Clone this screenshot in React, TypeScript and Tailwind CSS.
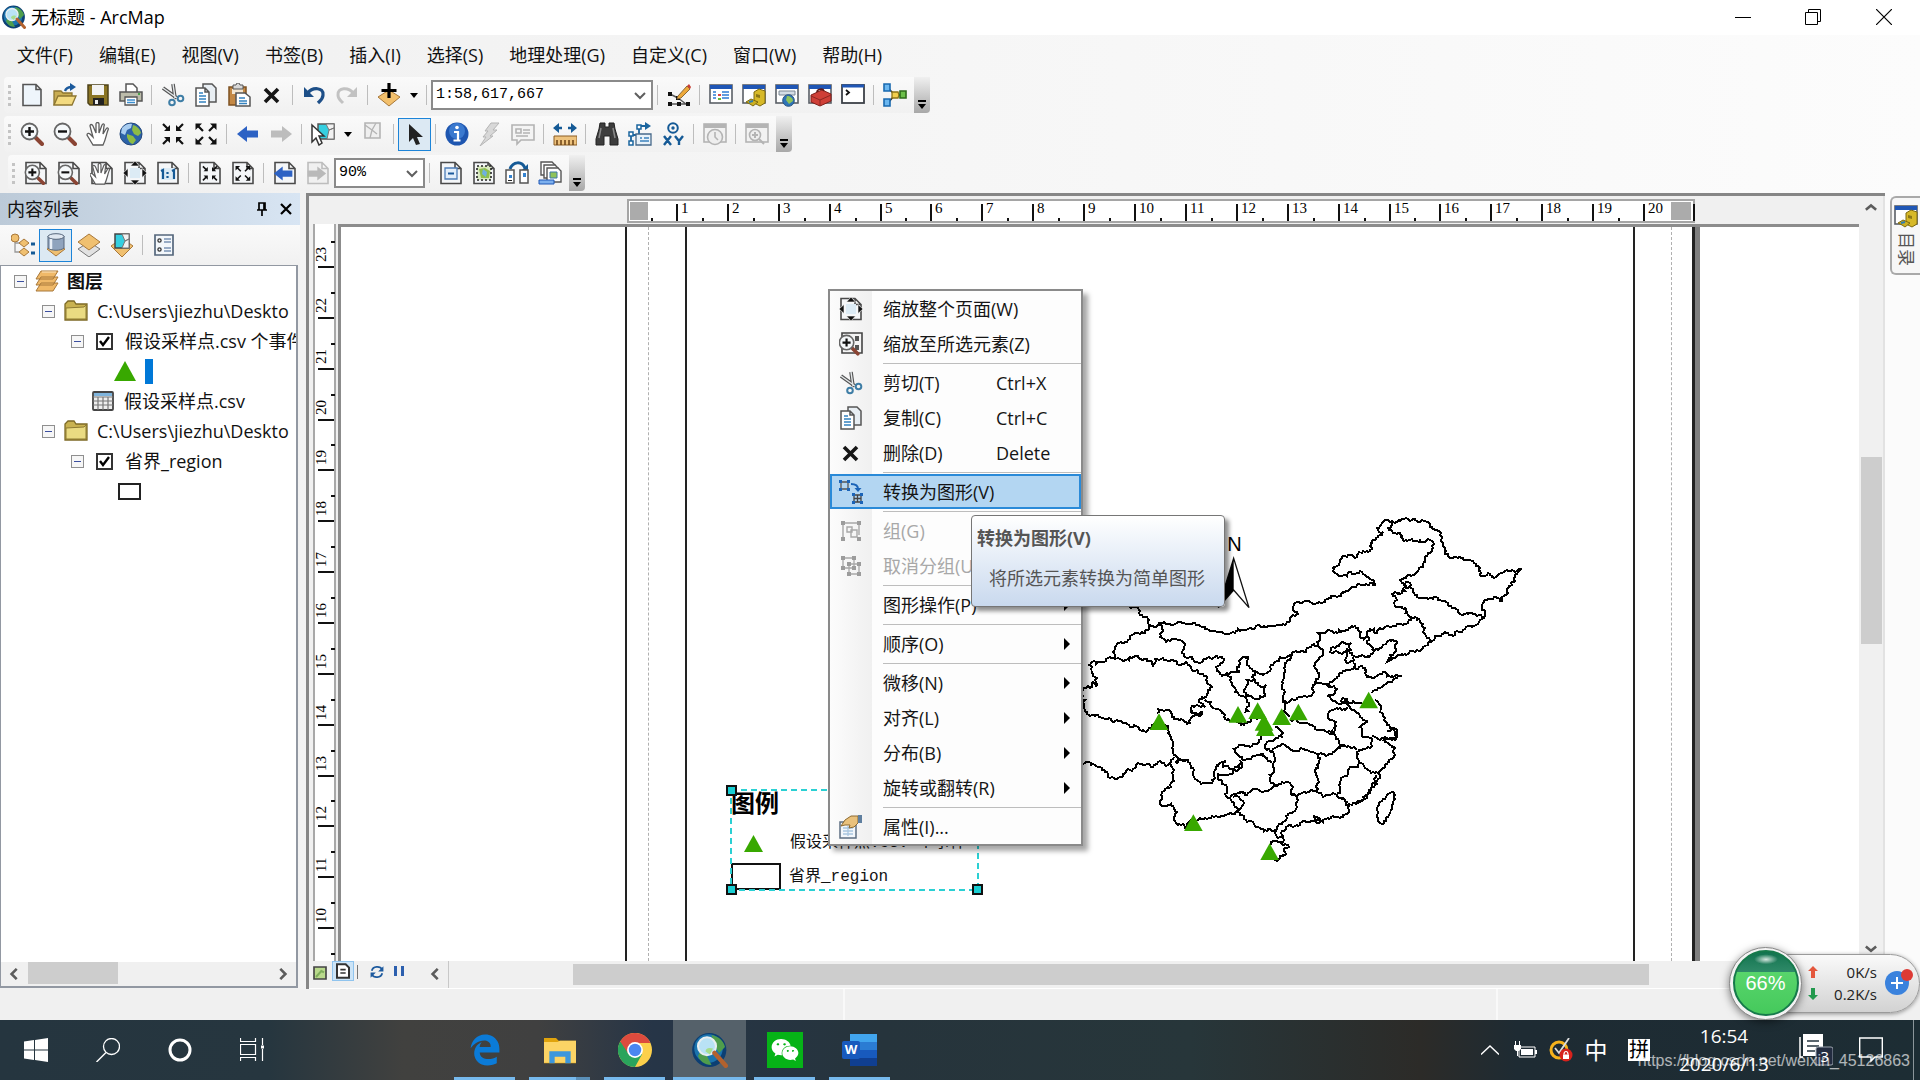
import type { ReactNode } from "react";
import { FaEdgeLegacy, FaWeixin } from "react-icons/fa6";

const menus = [
  "文件(F)",
  "编辑(E)",
  "视图(V)",
  "书签(B)",
  "插入(I)",
  "选择(S)",
  "地理处理(G)",
  "自定义(C)",
  "窗口(W)",
  "帮助(H)",
];

function Svg({ children, size = "size-6" }: { children: ReactNode; size?: string }) {
  return (
    <svg viewBox="0 0 24 24" className={`${size} shrink-0`} fill="none" aria-hidden="true">
      {children}
    </svg>
  );
}

/* ---------- icon parts ---------- */

const page = (
  <path d="M2 1.5h14l6 6v15H2zM16 1.5v6h6" fill="#f4f6f8" stroke="#4a4a4a" strokeWidth="1.6" />
);

const windowFrame = (
  <>
    <rect x="1" y="2" width="22" height="18" fill="#fff" stroke="#5a5f66" strokeWidth="1.6" />
    <rect x="1" y="2" width="22" height="4" fill="#1f56b5" />
  </>
);

const greyFrame = (
  <>
    <rect x="1" y="2" width="22" height="18" fill="#f2f2f2" stroke="#b4b4b4" strokeWidth="1.6" />
    <rect x="1" y="2" width="22" height="4" fill="#b4b4b4" />
  </>
);

const arrowsIn = (
  <>
    <path d="M2 2l5 5M22 2l-5 5M2 22l5-5M22 22l-5-5" stroke="#111" strokeWidth="2.2" />
    <path d="M9 3v6H3zM15 3v6h6zM9 21v-6H3zM15 21v-6h6z" fill="#111" />
  </>
);

const arrowsOut = (
  <>
    <path d="M4 4l5 5M20 4l-5 5M4 20l5-5M20 20l-5-5" stroke="#111" strokeWidth="2.2" />
    <path d="M1.5 8V1.500H8zM22.500 8V1.500H16zM1.500 16v6.500H8zM22.500 16v6.500H16z" fill="#111" />
  </>
);

const handShape = (
  <path
    d="M7 23L1 13c0-2 2-2 3-1l3 3L4 4c0-2 2-2 3 0l3 7V2c0-2 3-2 3 0v9l3-8c1-2 3-1 2 1l-1 8 3-5c1-2 3-1 2 1-2 5-2 9-5 15z"
    fill="#fff"
    stroke="#5c5c5c"
    strokeWidth="1.3"
  />
);

function Magnifier({ plus }: { plus?: boolean }) {
  return (
    <>
      <path d="M15 15l7 7" stroke="#8a4433" strokeWidth="4" strokeLinecap="round" />
      <circle cx="9.500" cy="9.500" r="8" fill="#f5f8fa" stroke="#666" strokeWidth="1.8" />
      <path d={plus ? "M5 9.500h9M9.500 5v9" : "M5 9.500h9"} stroke="#111" strokeWidth="2.4" />
    </>
  );
}

function Back({ fill }: { fill: string }) {
  return <path d="M1 12l10-8v4.500h11v7H11V20z" fill={fill} />;
}

function Globe() {
  return (
    <>
      <circle cx="12" cy="12" r="11" fill="#2c62a8" stroke="#23477a" />
      <path d="M3 6c3-4 8-5 10-4l-1 4-4 2-2 5-4-2z" fill="#a9cdf0" />
      <path d="M14 3c4 1 7 4 8 8l-3 3-4-2-2-4zM8 12l6 2 3 4-3 4c-3 0-5-4-6-7z" fill="#8dbb46" />
    </>
  );
}

function ArcGlobe({ size }: { size: string }) {
  return (
    <Svg size={size}>
      <circle cx="11.500" cy="12" r="11.400" fill="#0c3f73" />
      <circle cx="11" cy="11" r="9.500" fill="#1b74ad" />
      <path d="M13 2c5 1 8 4 9 8l-4 4-3-5zM5 14l5 2 3 6c-5 0-8-3-9-6z" fill="#4f9d4c" />
      <circle cx="10" cy="9.500" r="6" fill="#b9e2f5" stroke="#e8eef0" strokeWidth="1.400" />
      <path d="M9 13c0-2 2-3 5-2l-2 4z" fill="#a6dd8c" />
      <path d="M15 14l7.500 8.500" stroke="#b3622e" strokeWidth="3" strokeLinecap="round" />
    </Svg>
  );
}

const diamond = <path d="M12 3l11 8-11 11L1 11z" fill="#f0c070" stroke="#a9783a" />;

const icons: Record<string, ReactNode> = {
  new: (
    <path d="M3 1.500h13l5 5v16H3zM16 1.500v5h5" fill="#eef5fb" stroke="#555" strokeWidth="1.600" />
  ),
  open: (
    <>
      <path d="M1 22V8h7l2 2h9v4" fill="#c9ad52" stroke="#8d7630" strokeWidth="1.300" />
      <path d="M1 22l4-9h18l-4 9z" fill="#f3da80" stroke="#8d7630" strokeWidth="1.300" />
      <path d="M12 8c1-3 3-4 7-4" stroke="#1c5a9c" strokeWidth="2.400" />
      <path d="M17 0l6 4-6 4z" fill="#1c5a9c" />
    </>
  ),
  save: (
    <>
      <path d="M2 2h20v20H4l-2-2z" fill="#8a7424" stroke="#4e4218" strokeWidth="1.500" />
      <path d="M6 2h12v10H6z" fill="#f2f2f2" />
      <path d="M7 15h11v7H7z" fill="#222" />
      <path d="M9 17h3v4H9z" fill="#eee" />
    </>
  ),
  print: (
    <>
      <path d="M7 10V1h7l4 4v5" fill="#fff" stroke="#555" strokeWidth="1.500" />
      <path d="M1 9h22v9H1z" fill="#bcbcaa" stroke="#555" strokeWidth="1.500" />
      <path d="M6 14h12v8H6z" fill="#fff" stroke="#555" strokeWidth="1.300" />
      <path d="M8 17h8M8 19.500h8" stroke="#3c8fd0" strokeWidth="1.300" />
      <path d="M19 11h2" stroke="#4aa04a" strokeWidth="2" />
    </>
  ),
  cut: (
    <>
      <path d="M12 1l2 14M2 5l14 10" stroke="#555" strokeWidth="3.600" />
      <path d="M12 1l2 14M2 5l14 10" stroke="#e4e8ea" strokeWidth="1.400" />
      <circle cx="11" cy="19.500" r="2.800" stroke="#3f7ea6" strokeWidth="2" />
      <circle cx="19.500" cy="15.500" r="2.800" stroke="#3f7ea6" strokeWidth="2" />
    </>
  ),
  copy: (
    <>
      <path d="M9 1h9l4 4v14H9z" fill="#e8eef3" stroke="#555" strokeWidth="1.500" />
      <path d="M2 5h9l4 4v14H2zM11 5v4h4" fill="#fff" stroke="#555" strokeWidth="1.500" />
      <path d="M5 10h4M5 13h7M5 16h7M5 19h7" stroke="#3583c0" strokeWidth="1.500" />
    </>
  ),
  paste: (
    <>
      <path d="M2 4h17v18H2z" fill="#c48945" stroke="#7d5122" strokeWidth="1.500" />
      <path d="M5 6h11v5H5z" fill="#f3e6d2" />
      <path d="M6 2h3l1-2h2l1 2h3v4H6z" fill="#d8d8d8" stroke="#555" />
      <path d="M9 10h9l5 4v9H9z" fill="#fff" stroke="#555" strokeWidth="1.500" />
      <path d="M12 15h6M12 18h8M12 20.500h8" stroke="#3583c0" strokeWidth="1.300" />
    </>
  ),
  delete: <path d="M5 6l13 13M18 6L5 19" stroke="#161616" strokeWidth="3.600" />,
  undo: (
    <>
      <path d="M6 10c4-6 16-6 15 2 0 4-3 6-5 8" stroke="#1d4f88" strokeWidth="3.200" />
      <path d="M2 4v10h10z" fill="#1d4f88" />
    </>
  ),
  redo: (
    <>
      <path d="M18 10C14 4 2 4 3 12c0 4 3 6 5 8" stroke="#c2c2c2" strokeWidth="3" />
      <path d="M22 4v10H12z" fill="#c2c2c2" />
    </>
  ),
  add: (
    <>
      <path d="M12 7l11 7-11 9L1 14z" fill="#f3c06c" stroke="#a8783a" />
      <path d="M12 0v15M4.500 7.500h15" stroke="#000" strokeWidth="3.200" />
    </>
  ),
  edit: (
    <>
      <path d="M3 11l8 4M3 21h19M11 15l8 6" stroke="#555" strokeWidth="1.400" />
      <path d="M1 9h4v4H1zM1 19h4v4H1zM10 19h4v4h-4zM19 19h4v4h-4zM9 13h4v4H9z" fill="#111" />
      <path d="M11 13L20 3l3 3-9 9-4 1z" fill="#eda93a" stroke="#8a6a3a" />
      <path d="M20 3l2-2 2 3-1 2z" fill="#c83f34" />
    </>
  ),
  toc: (
    <>
      {windowFrame}
      <path d="M4 9h3M4 12h3M4 15h3M13 9h7M13 12h7M13 15h7" stroke="#2f7cd3" strokeWidth="1.600" />
      <path d="M9 12h3" stroke="#d44" strokeWidth="2" />
      <path d="M9 16h3" stroke="#6b3" strokeWidth="2" />
    </>
  ),
  catalog: (
    <>
      {windowFrame}
      <path d="M12 9l5-3 6 2v12l-5 3-6-3z" fill="#d7b928" stroke="#7e6a10" />
      <path d="M14 11l4 1v3l-4-1z" fill="#8c7716" />
      <path d="M4 19l5-3 7 3-5 4-3-2z" fill="#cdb021" stroke="#7e6a10" />
      <path d="M7 19l4-1" stroke="#2f7cb0" strokeWidth="2" />
    </>
  ),
  search: (
    <>
      {windowFrame}
      <path d="M4 8h16v4H4z" fill="#d5dde5" stroke="#7c8894" />
      <circle cx="13.500" cy="17.500" r="5.800" fill="#2f74b8" stroke="#24517f" />
      <path d="M12 13c3 0 6 2 6 5l-4 3-3-4z" fill="#8fc35a" />
    </>
  ),
  toolbox: (
    <>
      {windowFrame}
      <path d="M3 12l11-5 9 4v7l-11 5-9-4z" fill="#cf3f37" stroke="#7d1f1a" />
      <path d="M3 13l9 4 11-5M12 17v6" stroke="#8d2822" />
      <path d="M9 9c0-3 6-4 7-1" stroke="#5f1714" strokeWidth="1.600" />
    </>
  ),
  python: (
    <>
      <rect x="1" y="2" width="22" height="18" fill="#fff" stroke="#3c4148" strokeWidth="1.800" />
      <rect x="1" y="1.500" width="22" height="3" fill="#1f56b5" />
      <path d="M5 7l3 2.500L5 12" stroke="#111" strokeWidth="1.800" />
    </>
  ),
  model: (
    <>
      <path d="M5 5l6 6M5 20l6-7M12 12h8" stroke="#333" strokeWidth="1.500" />
      <path d="M1 1h6v7H1zM1 16h6v7H1z" fill="#6bb7f0" stroke="#1a69b0" strokeWidth="1.600" />
      <path d="M9 9l6 0 1 3-1 3H9z" fill="#f3cf4c" stroke="#8f7416" strokeWidth="1.300" />
      <path d="M17 8h6v7h-6z" fill="#6cc04a" stroke="#2e6b1b" strokeWidth="1.600" />
    </>
  ),
  zoomIn: <Magnifier plus />,
  zoomOut: <Magnifier />,
  pan: handShape,
  globe: <Globe />,
  fixedIn: arrowsIn,
  fixedOut: arrowsOut,
  back: <Back fill="#2d62c4" />,
  forward: (
    <g transform="matrix(-1 0 0 1 24 0)">
      <Back fill="#bdbdbd" />
    </g>
  ),
  selectFeatures: (
    <>
      <path d="M7 2h16v15H7z" fill="#35cfe0" stroke="#555" strokeWidth="1.500" />
      <path d="M15 2l3 6 5-2V2zM18 8l-2 9h7V6z" fill="#f1f1f1" stroke="#777" />
      <path d="M1 3l12 11-5 0 3 7-3 2-3-7-4 4z" fill="#fff" stroke="#333" strokeWidth="1.500" />
    </>
  ),
  clear: (
    <>
      <path d="M4 1h15v15H4z" fill="#efefef" stroke="#b4b4b4" strokeWidth="1.600" />
      <path d="M4 3l7 5 4-7M11 8l-2 8M11 8l5 4" stroke="#b4b4b4" strokeWidth="1.300" />
    </>
  ),
  pointer: <path d="M6 2l14 13h-6l3 7-4 1-3-7-4 4z" fill="#222" />,
  identify: (
    <>
      <circle cx="12" cy="12" r="11.500" fill="#1e56b0" />
      <circle cx="12" cy="9" r="8" fill="#3a79cf" />
      <path d="M9 10h4v8M8.500 18.500h7" stroke="#fff" strokeWidth="2.200" />
      <circle cx="12" cy="5.500" r="1.800" fill="#fff" />
    </>
  ),
  lightning: <path d="M13 1h8l-6 7h4l-7 6h3L2 24l6-9H5l5-6H7z" fill="#d8d8d8" stroke="#b5b5b5" />,
  popup: (
    <>
      <path d="M1 3h22v15H10l-4 4v-4H1z" fill="#f4f4f4" stroke="#b3b3b3" strokeWidth="1.600" />
      <path d="M5 7h5v4H5zM12 8h7M12 11h7M5 14h12" stroke="#b3b3b3" strokeWidth="1.600" />
    </>
  ),
  measure: (
    <>
      <path d="M4 6h5M15 6h5" stroke="#155a96" strokeWidth="2.600" />
      <path d="M0 6l6-5v10zM24 6l-6-5v10z" fill="#155a96" />
      <path d="M1 14h23v9H1z" fill="#eec37e" stroke="#8a5c25" />
      <path d="M4 23v-5M8 23v-5M12 23v-5M16 23v-5M20 23v-5" stroke="#6b4214" strokeWidth="1.500" />
    </>
  ),
  find: (
    <>
      <path d="M5 1h5v4h4V1h5l1 6 3 10v6h-8v-9h-6v9H1v-6l3-10z" fill="#3d3d3d" stroke="#222" />
      <path d="M6 6l-2 10M18 6l2 10" stroke="#8a8a8a" strokeWidth="1.500" />
    </>
  ),
  route: (
    <>
      <path d="M3 21v-8h8V4h8" stroke="#1b659f" strokeWidth="1.800" />
      <path d="M17 0l6 4-6 4z" fill="#1b659f" />
      <path d="M1 10h4v4H1zM9 3h4v4H9zM1 19h4v4H1z" fill="#fff" stroke="#1b659f" strokeWidth="1.500" />
      <path d="M8 12h15v11H8z" fill="#e9f2f9" stroke="#47698a" strokeWidth="1.300" />
      <path d="M12 16h2M16 16h5M12 19h9" stroke="#3c82bd" strokeWidth="1.600" />
    </>
  ),
  xy: (
    <>
      <circle cx="12" cy="6" r="4.800" stroke="#155a96" strokeWidth="2" />
      <circle cx="12" cy="6" r="1.700" fill="#155a96" />
      <path d="M3 14l7 9M10 14l-7 9M14 14l4 5 4-5M18 18v5" stroke="#155a96" strokeWidth="2.400" />
    </>
  ),
  time: (
    <>
      {greyFrame}
      <circle cx="12" cy="15" r="7.500" fill="#eee" stroke="#b4b4b4" strokeWidth="1.600" />
      <path d="M12 10v5l3 3" stroke="#b4b4b4" strokeWidth="1.600" />
    </>
  ),
  viewer: (
    <>
      {greyFrame}
      <circle cx="10" cy="13" r="5.500" fill="#eee" stroke="#b4b4b4" strokeWidth="1.600" />
      <path d="M7 13h6M10 10v6M14 17l5 5" stroke="#b4b4b4" strokeWidth="2" />
    </>
  ),
  pageZoomIn: (
    <>
      {page}
      <g transform="translate(0 3) scale(.88)">
        <Magnifier plus />
      </g>
    </>
  ),
  pageZoomOut: (
    <>
      {page}
      <g transform="translate(0 3) scale(.88)">
        <Magnifier />
      </g>
    </>
  ),
  pagePan: (
    <>
      {page}
      <g transform="translate(-1 2) scale(.92)">{handShape}</g>
    </>
  ),
  wholePage: (
    <>
      {page}
      <path d="M7 7h10v10H7z" fill="#dcebf5" />
      <path
        d="M12 0l4.500 5h-9zM12 24l4.500-5h-9zM0 12l5-4.500v9zM24 12l-5-4.500v9z"
        fill="#111"
        stroke="#fff"
        strokeWidth=".6"
      />
    </>
  ),
  oneToOne: (
    <>
      {page}
      <path d="M5 7h14v12H5z" fill="#dcebf5" />
      <path d="M5 10l2-1v9M16 10l2-1v9M11.500 11v2M11.500 15v2" stroke="#155a96" strokeWidth="2.200" />
    </>
  ),
  pageFixedIn: (
    <>
      {page}
      <g transform="translate(3.500 4) scale(.7)">{arrowsIn}</g>
    </>
  ),
  pageFixedOut: (
    <>
      {page}
      <g transform="translate(3.500 4) scale(.7)">{arrowsOut}</g>
    </>
  ),
  pageBack: (
    <>
      {page}
      <g transform="translate(0 2) scale(.88)">
        <Back fill="#2d62c4" />
      </g>
    </>
  ),
  pageForward: (
    <>
      <path d="M2 1.500h14l6 6v15H2zM16 1.500v6h6" fill="#f0f0f0" stroke="#bdbdbd" strokeWidth="1.600" />
      <g transform="matrix(-.88 0 0 .88 21 2)">
        <Back fill="#b9b9b9" />
      </g>
    </>
  ),
  draft: (
    <>
      {page}
      <path d="M6 7h12v11H6z" fill="#e3eefa" stroke="#4d7db8" strokeWidth="1.300" />
      <path d="M9 12.500h6" stroke="#1c5a9c" strokeWidth="2" />
    </>
  ),
  focus: (
    <>
      {page}
      <path d="M5 5h14v14H5z" fill="#d8e8c0" stroke="#222" strokeWidth="1.600" strokeDasharray="2 2" />
      <path d="M7 8l6-1 5 3-1 7H9z" fill="#8fbf4c" />
      <path d="M11 8l4 3-1 5-4-3z" fill="#6fb1de" />
    </>
  ),
  layout: (
    <>
      <path d="M5 8c3-8 12-8 15-1" stroke="#155a96" strokeWidth="3" />
      <path d="M23 3v7h-7z" fill="#155a96" />
      <path d="M1 9h8v13H1zM15 9h8v13h-8z" fill="#fff" stroke="#555" strokeWidth="1.500" />
      <path d="M4 14h3v3H4zM18 12h3v4h-3z" fill="#3583d0" />
      <path d="M3 19.500h4" stroke="#222" />
    </>
  ),
  pages: (
    <>
      <path d="M3 1h11l3 3v10H3z" fill="#fff" stroke="#555" strokeWidth="1.400" />
      <path d="M6 4h11l3 3v10H6z" fill="#fff" stroke="#555" strokeWidth="1.400" />
      <path d="M9 7h11l3 3v11H9z" fill="#fff" stroke="#555" strokeWidth="1.400" />
      <path d="M12 11h7v6h-7z" fill="#8fc35a" stroke="#3d78a8" />
      <path d="M1 19h15v4H1z" fill="#7db0ee" stroke="#1f56b5" />
    </>
  ),
  bySource: (
    <>
      <path d="M4 6v13h8M4 10h8" stroke="#999" strokeWidth="1.300" />
      <circle cx="4" cy="5" r="4" fill="#f0c070" stroke="#a9783a" />
      <path d="M13 6l5 4-5 4-5-4zM13 15l5 4-5 4-5-4z" fill="#f0c070" stroke="#a9783a" />
      <path d="M20 11h4M20 20h4" stroke="#155a96" strokeWidth="3" />
    </>
  ),
  byDb: (
    <>
      <path d="M12 12l9 4-9 7-9-7z" fill="#f0c070" stroke="#a9783a" />
      <path d="M4 3v12c3 3 13 3 16 0V3z" fill="#8fa3bd" stroke="#57677c" />
      <ellipse cx="12" cy="3.500" rx="8" ry="2.800" fill="#dfe7f0" stroke="#57677c" />
      <path d="M7 6v10" stroke="#e8eef5" strokeWidth="2.500" />
    </>
  ),
  byVisible: (
    <>
      <path d="M12 9l11 7-11 8-11-8z" fill="#e2e2e2" stroke="#777" />
      <path d="M12 1l11 8-11 8L1 9z" fill="#f0c070" stroke="#a9783a" />
    </>
  ),
  bySelection: (
    <>
      <g transform="translate(0 2)">{diamond}</g>
      <path d="M5 1h14v14H5z" fill="#35cfe0" stroke="#444" strokeWidth="1.500" />
      <path d="M12 1l3 7 4-2V1zM15 8l-3 7h7V6z" fill="#f1f1f1" stroke="#777" />
    </>
  ),
  options: (
    <>
      <path d="M3 2h18v20H3z" fill="#f3f7fb" stroke="#55677c" strokeWidth="1.700" />
      <circle cx="7.500" cy="7.500" r="1.600" stroke="#333" strokeWidth="1.300" />
      <circle cx="7.500" cy="16.500" r="1.600" stroke="#333" strokeWidth="1.300" />
      <path d="M12 6h7M12 9h7M12 15h7M12 18h7" stroke="#7a93b4" strokeWidth="1.500" />
    </>
  ),
  layers: (
    <>
      <path d="M6 14h17l-5 8H1zM6 8h17l-5 8H1zM6 2h17l-5 8H1z" fill="#f0b968" stroke="#a8783a" />
      <path d="M7 3h14" stroke="#fbe5c0" />
    </>
  ),
  folder: (
    <>
      <path d="M1 21V5l3-3h6l2 3h11v16z" fill="#c9b251" stroke="#7d6a26" strokeWidth="1.300" />
      <path d="M2 9l18-1 2-2v14H2z" fill="#eadb82" stroke="#8d7a32" />
    </>
  ),
  table: (
    <>
      <rect x="2" y="3" width="20" height="18" rx="1" fill="#eee" stroke="#444" strokeWidth="1.800" />
      <path d="M3 4h18v3H3z" fill="#7fb4dc" />
      <path d="M2 8h20M2 12h20M2 16h20M7 8v13M12 8v13M17 8v13" stroke="#777" strokeWidth="1.200" />
    </>
  ),
  zoomSelected: (
    <>
      <path d="M3 1h20v20H3z" fill="#f4f4f4" stroke="#444" strokeWidth="1.600" />
      <path d="M16 4h4v5h-4zM16 13h4v5h-4z" fill="#555" />
      <g transform="translate(-1 2) scale(.9)">
        <Magnifier plus />
      </g>
    </>
  ),
  convert: (
    <>
      <path d="M2 2h7v7H2z" stroke="#555" strokeWidth="1.300" />
      <path d="M0 0h3v3H0zM8 0h3v3H8zM0 8h3v3H0zM8 8h3v3H8z" fill="#1b64b8" />
      <path d="M12 4c5 0 7 2 7 5" stroke="#1b64b8" strokeWidth="2" />
      <path d="M15.500 8h7L19 12z" fill="#1b64b8" />
      <path d="M15 15h7v7h-7zM18.500 15v7M15 18.500h7" stroke="#444" strokeWidth="1.300" />
      <path d="M13 13h3v3h-3zM21 13h3v3h-3zM13 21h3v3h-3zM21 21h3v3h-3z" fill="#1b64b8" />
    </>
  ),
  group: (
    <>
      <path d="M4 4v16M4 4h16v12M8 8h5v5H8zM12 11h6v7h-6z" stroke="#a8a8a8" strokeWidth="1.400" />
      <path d="M2 2h4v4H2zM18 2h4v4h-4zM2 18h4v4H2zM18 18h4v4h-4z" fill="#9c9c9c" />
    </>
  ),
  ungroup: (
    <>
      <path d="M4 4h11v10H4zM10 10h10v10H10z" stroke="#a8a8a8" strokeWidth="1.300" />
      <path
        d="M2 2h4v4H2zM13 2h4v4h-4zM2 12h4v4H2zM13 12h4v4h-4zM8 8h4v4H8zM18 8h4v4h-4zM8 18h4v4H8zM18 18h4v4h-4z"
        fill="#9c9c9c"
      />
    </>
  ),
  properties: (
    <>
      <path d="M1 7h16v16H1z" fill="#f3f7fb" stroke="#5d6f82" strokeWidth="1.500" />
      <path d="M4 13h10M4 16h10M4 19h10M9 11v10" stroke="#a9c6e0" strokeWidth="1.300" />
      <path d="M2 11l4-6 6-4h7v7l-4 4-5 1 1-3-5 0z" fill="#e9c17c" stroke="#8d6a30" />
      <path d="M19 0h4v8h-4z" fill="#5f7f9f" />
    </>
  ),
};

/* ---------- toolbars ---------- */

function ToolButton({ id, label, active, off }: { id: string; label: string; active?: boolean; off?: boolean }) {
  return (
    <button
      aria-label={label}
      disabled={off}
      className={`flex size-[33px] shrink-0 items-center justify-center ${
        active ? "border border-[#1c84d8] bg-[#dce9f3]" : ""
      }`}
    >
      <Svg>{icons[id]}</Svg>
    </button>
  );
}

function Sep() {
  return (
    <div className="flex w-[9px] shrink-0 justify-center">
      <div className="h-5 w-px bg-[#bdbdbd]" />
    </div>
  );
}

function Caret() {
  return (
    <button aria-label="更多" className="flex w-[17px] shrink-0 items-center justify-center">
      <svg viewBox="0 0 8 5" className="h-[5px] w-2">
        <path d="M0 0h8L4 5z" />
      </svg>
    </button>
  );
}

function Combo({ label, value, width }: { label: string; value: string; width: string }) {
  return (
    <div className={`relative flex shrink-0 ${width}`}>
      <select
        aria-label={label}
        className="h-[30px] w-full appearance-none border-2 border-[#8a8a8a] bg-white pl-[3px] text-[15px] text-black [font-family:'Liberation_Mono',monospace]"
      >
        <option>{value}</option>
      </select>
      <svg viewBox="0 0 12 8" className="pointer-events-none absolute top-3 right-[7px] h-2 w-3">
        <path d="M1 1l5 5 5-5" fill="none" stroke="#5f5f5f" strokeWidth="2" />
      </svg>
    </div>
  );
}

function Toolbar({ children, indent }: { children: ReactNode; indent?: boolean }) {
  return (
    <div
      className={`flex h-9 items-center self-start rounded-l bg-linear-to-b from-[#fafafa] to-[#f1f1f1] ${
        indent ? "ml-2" : "ml-1"
      }`}
    >
      <div className="flex w-[11px] shrink-0 flex-col items-center gap-[3px]">
        {[0, 1, 2, 3].map((i) => (
          <span key={i} className="size-[3px] bg-[#c4c4c4]" />
        ))}
      </div>
      {children}
      <button
        aria-label="工具条选项"
        className="ml-[3px] flex h-full w-4 items-end justify-center self-end rounded-br bg-linear-to-b from-[#f0f0f0] to-[#a8a8a8] pb-1"
      >
        <svg viewBox="0 0 10 9" className="h-[9px] w-2.5">
          <path d="M1 0h8v2H1zM1 4h8L5 9z" />
        </svg>
      </button>
    </div>
  );
}

/* ---------- contents panel ---------- */

function Expander() {
  return (
    <button
      aria-label="折叠"
      className="flex size-[13px] shrink-0 items-center justify-center border border-[#8f8f8f] bg-[#f6f6f6]"
    >
      <span className="h-px w-[7px] bg-[#3b4fa0]" />
    </button>
  );
}

function LayerRow({ name }: { name: string }) {
  return (
    <div className="flex h-[30px] items-center gap-3 pl-[70px]">
      <Expander />
      <label className="flex items-center gap-3">
        <span className="relative flex size-[17px] shrink-0">
          <input
            type="checkbox"
            defaultChecked
            className="peer size-[17px] appearance-none border-2 border-[#333] bg-white"
          />
          <svg
            viewBox="0 0 17 17"
            className="pointer-events-none absolute inset-0 hidden size-[17px] peer-checked:block"
          >
            <path d="M4 8l3 4 6-8" fill="none" stroke="#000" strokeWidth="2.400" />
          </svg>
        </span>
        {name}
      </label>
    </div>
  );
}

function FolderRow({ name }: { name: string }) {
  return (
    <div className="flex h-[30px] items-center gap-[9px] pl-[41px]">
      <Expander />
      <Svg>{icons.folder}</Svg>
      {name}
    </div>
  );
}

function Chevron({ dir }: { dir: "left" | "right" | "up" | "down" }) {
  const d = {
    left: "M9 1L3 7l6 6",
    right: "M5 1l6 6-6 6",
    up: "M1 9l6-5 6 5",
    down: "M1 4l6 5 6-5",
  }[dir];
  return (
    <svg viewBox="0 0 14 14" className="size-3">
      <path d={d} fill="none" stroke="#5c5c5c" strokeWidth="3" />
    </svg>
  );
}

function ContentsPanel() {
  return (
    <aside className="flex w-[300px] shrink-0 flex-col">
      <header className="flex h-8 items-center bg-linear-to-r from-[#bccad8] to-[#d8e5f3] pr-0.5 pl-[7px] text-[18px] leading-6">
        <h2 className="flex-1">内容列表</h2>
        <button aria-label="自动隐藏" className="flex w-6 justify-center">
          <svg viewBox="0 0 12 14" className="h-3.5 w-3">
            <path d="M3 8V1h6v7M8 1v7M1 8h10M6 8v6" fill="none" stroke="#000" strokeWidth="1.700" />
          </svg>
        </button>
        <button aria-label="关闭" className="flex w-6 justify-center">
          <svg viewBox="0 0 12 12" className="size-3">
            <path d="M1 1l10 10M11 1L1 11" stroke="#000" strokeWidth="2.200" />
          </svg>
        </button>
      </header>
      <div className="flex h-10 items-center bg-linear-to-b from-[#fafafa] to-[#f1f1f1] pl-[6px]">
        <ToolButton id="bySource" label="按绘制顺序列出" />
        <ToolButton id="byDb" label="按源列出" active />
        <ToolButton id="byVisible" label="按可见性列出" />
        <ToolButton id="bySelection" label="按选择列出" />
        <Sep />
        <ToolButton id="options" label="选项" />
      </div>
      <div className="mr-0.5 mb-px flex min-h-0 flex-1 flex-col border-2 border-t border-l border-[#9298a2] bg-white text-[18px] leading-6">
        <div className="flex-1 overflow-hidden whitespace-nowrap">
          <div className="flex h-[30px] items-center gap-2 pl-[13px] font-bold">
            <Expander />
            <Svg>{icons.layers}</Svg>
            图层
          </div>
          <FolderRow name="C:\Users\jiezhu\Deskto" />
          <LayerRow name="假设采样点.csv 个事件" />
          <div className="flex h-[30px] items-center gap-[9px] pl-[113px]">
            <svg viewBox="0 0 22 20" className="h-5 w-[22px]">
              <path d="M11 0l11 20H0z" fill="#38a800" />
            </svg>
            <span className="h-[25px] w-2 bg-[#0078d7]" />
          </div>
          <div className="flex h-[30px] items-center gap-[9px] pl-[90px]">
            <Svg>{icons.table}</Svg>
            假设采样点.csv
          </div>
          <FolderRow name="C:\Users\jiezhu\Deskto" />
          <LayerRow name="省界_region" />
          <div className="flex h-[30px] items-center pl-[117px]">
            <span className="h-[17px] w-[23px] border-2 border-[#222]" />
          </div>
        </div>
        <div className="flex h-6 items-center bg-[#f0f0f0] px-2">
          <Chevron dir="left" />
          <div className="flex h-full flex-1 px-[7px]">
            <div className="h-[22px] w-[90px] bg-[#cdcdcd]" />
          </div>
          <Chevron dir="right" />
        </div>
      </div>
    </aside>
  );
}

/* ---------- rulers ---------- */

const rulerText = "text-[15px] [font-family:'Liberation_Serif',serif]";

function TopRuler() {
  const ticks = Array.from({ length: 20 }, (_, i) => i + 1);
  return (
    <svg viewBox="0 0 1072 25" className="h-[25px] w-[1072px] shrink-0" shapeRendering="crispEdges">
      <rect x="1" y="1" width="1066" height="22" fill="#fff" stroke="#a5a5a5" strokeWidth="2" />
      <rect x="3" y="3" width="18" height="18" fill="#ababab" />
      <rect x="1044" y="3" width="20" height="18" fill="#ababab" />
      <path d="M1067 5v17" stroke="#111" strokeWidth="2" />
      {ticks.map((n) => (
        <g key={n}>
          <path
            d={`M${Math.round(n * 50.9 - 1)} 5v17M${Math.round(n * 50.9 - 26)} 19v3`}
            stroke="#111"
            strokeWidth="2"
          />
          <text x={Math.round(n * 50.9 + 3)} y="14" className={rulerText}>
            {n}
          </text>
        </g>
      ))}
    </svg>
  );
}

function SideRuler() {
  const ticks = Array.from({ length: 16 }, (_, i) => 23 - i);
  return (
    <svg className="w-[29px] shrink-0 self-stretch bg-[#f0f0f0]" shapeRendering="crispEdges">
      <rect x="4" y="0" width="22" height="100%" fill="#fff" />
      <path d="M5 0v2000M25.500 0v2000" stroke="#a8a8a8" strokeWidth="2" />
      {ticks.map((n, i) => {
        const y = Math.round(43 + i * 50.85);
        return (
          <g key={n}>
            <path d={`M9 ${y}h16M22 ${y - 25}h4`} stroke="#111" strokeWidth="2" />
            <text transform={`translate(17 ${y - 5}) rotate(-90)`} className={rulerText}>
              {n}
            </text>
          </g>
        );
      })}
    </svg>
  );
}

/* ---------- map ---------- */

// Province and coast lines, in thirds of a pixel.
const borders = [
  "150,320 180,333 190,350 205,370 235,375 280,374 330,373 365,380 400,392 440,402 465,398 510,385 560,380 600,375 630,358 655,342 640,325 645,308 670,305 710,310 740,297 770,290 790,275 820,262 850,256 885,256 880,240 850,222 830,218 800,228 765,220 760,212 778,195 790,168 830,172 865,155 872,130 895,108 908,95 890,85 905,68 935,62 985,58 1020,66 1050,72 1070,90 1085,115 1095,145 1108,170 1160,180 1195,198 1200,225 1250,228 1285,213 1325,207 1305,225 1295,255 1285,280 1265,303 1235,297 1210,310 1212,355 1195,372 1170,378 1150,390 1120,408 1085,402 1052,425 1030,440 1005,455 970,465 940,475 922,485 930,465 945,455 950,430 925,422 905,440 880,450 860,472 825,475",
  "935,62 925,85 960,98 972,122 1010,124 1045,118 1062,132 1045,160 1035,185 1015,212 985,225 958,240 972,255 990,262 1000,275 1012,290 1050,295 1085,302 1115,325 1145,345 1175,338 1212,352",
  "975,252 985,246 992,256 982,264 975,252",
  "972,262 965,280 935,282 950,300 948,322 975,325 990,350 1020,362 1035,385 1052,425",
  "990,350 985,365 950,372 915,380 890,398 870,385 865,410 840,410 835,385 815,378 790,392 770,400 740,392 715,398 712,425 718,440",
  "235,375 245,395 240,412 258,425 305,424 315,435 305,455 335,472 360,488 390,473 425,470 428,485 408,500 412,512 435,525 450,520 478,515 480,490 490,472 505,470 500,495 520,512 560,520 570,500 600,472 630,465 660,455 690,442 718,438",
  "205,370 195,400 155,405 140,425 108,437 98,455 102,475",
  "25,495 60,487 100,475 150,472 200,478 218,497 225,478 270,482 300,495 350,510 382,530 395,562 380,585 358,605 375,620 350,615 335,617 340,640 365,635 360,648 335,650 330,668 300,660 275,650 258,630 235,628 232,640",
  "25,495 35,515 50,535 48,562 38,545 35,560 12,565 15,600 12,625 35,645 70,655 130,668 175,680 200,692 215,685 235,670",
  "235,670 265,690 275,720 282,765 290,790 300,775 325,785 340,820 370,850 395,848 402,815 425,785 435,780 430,800 460,812 485,800 480,780",
  "10,792 45,795 65,805 85,830 125,830 145,808 180,792 220,800 240,782 255,795 270,790 282,770",
  "270,790 272,860 245,880 240,912 272,912 290,935 288,968 315,985 345,960 375,955 420,950 450,940 475,932 455,905 440,890 440,860 418,840 415,822 460,818 470,800 490,795",
  "375,600 400,625 425,635 440,660 470,665 530,660",
  "440,520 455,550 475,580 495,590 530,597 555,588 558,555 525,545 500,540 498,560 500,600 495,640",
  "525,515 515,530 525,545",
  "630,465 615,490 612,530 612,570 608,605 618,640 630,650",
  "718,440 728,465 705,490 718,520 705,550 700,580 660,590 630,603 610,605",
  "705,555 750,562 755,545 780,520 820,508 855,505 860,530 890,528 910,515 965,527 930,545 895,565 875,580",
  "750,562 770,568 765,580 740,590 755,600 790,605 830,608 865,605",
  "755,460 760,440 785,425 812,430 815,450 790,460 755,460",
  "795,455 815,460 822,480 805,490 795,480 795,455",
  "865,410 860,430 880,450",
  "820,490 822,505",
  "630,660 665,668 705,680 740,695 765,705 775,745",
  "800,620 770,625 750,632 745,655 768,665 765,690 745,700",
  "782,600 800,598 800,612 784,612 782,600",
  "790,605 810,625 835,640 862,662 840,680 850,710 875,715",
  "885,600 905,640 920,670 945,695 952,712 935,720 915,712 875,712",
  "920,695 950,690 945,720 918,715",
  "875,715 860,745 832,755 838,785 855,805 895,820 915,795 940,775 945,745 915,725 915,712",
  "775,745 800,740 832,750",
  "895,820 880,850 865,880 840,905 805,925 795,900 770,885 780,845 805,810 838,790",
  "888,825 876,862 850,900 825,915",
  "775,745 715,765 718,790 705,815 715,850 712,875 730,890 770,885",
  "575,752 620,740 680,750 705,760 715,765",
  "575,752 580,800 570,825 585,855 630,850 635,885 660,882 712,875",
  "585,680 605,710 560,725 555,745 575,760",
  "545,705 515,738 478,735 465,755 490,780 530,765 555,770 575,790",
  "450,890 500,885 520,868 560,872 590,855",
  "460,890 490,915 475,935 500,965 540,985 590,988 610,965 635,940 655,900 635,885",
  "805,925 790,945 730,965 700,962 702,945 720,965 650,975 605,992 610,1015 590,1012 590,988",
  "570,1035 595,1025 625,1035 615,1065 590,1082 570,1070",
  "610,1015 600,1030",
  "935,877 943,900 925,950 910,972 890,945 900,905 935,877",
];

const samples = [
  [237, 640],
  [474, 618],
  [533, 607],
  [552, 642],
  [556, 658],
  [605, 625],
  [655, 611],
  [866, 575],
  [340, 943],
  [569, 1030],
];

// Midpoint displacement snapped to the pixel grid gives the stair-stepped outline.
function roughen(line: string) {
  let seed = line.length * 7 + 3;
  const rand = () => {
    seed = (seed * 16807) % 2147483647;
    return seed / 2147483647 - 0.5;
  };
  const pts = line.split(" ").map((p) => p.split(",").map(Number));
  const out: number[][] = [pts[0]];
  const walk = (a: number[], b: number[]) => {
    const len = Math.hypot(b[0] - a[0], b[1] - a[1]);
    if (len > 7) {
      const k = Math.min(len, 26) * 0.6 * rand();
      const mid = [
        (a[0] + b[0]) / 2 - ((b[1] - a[1]) / len) * k,
        (a[1] + b[1]) / 2 + ((b[0] - a[0]) / len) * k,
      ];
      walk(a, mid);
      walk(mid, b);
    } else {
      out.push(b);
    }
  };
  for (let i = 1; i < pts.length; i++) walk(pts[i - 1], pts[i]);
  return out.map((p) => p.map((v) => Math.round(v / 3) * 3).join(",")).join(" ");
}

function ChinaMap() {
  return (
    <svg viewBox="0 0 1380 1140" className="absolute top-[273px] left-[739px] h-[380px] w-[460px]">
      <g fill="none" stroke="#000" strokeWidth="5" shapeRendering="crispEdges">
        {borders.map((b) => (
          <polyline key={b} points={roughen(b)} />
        ))}
      </g>
      {samples.map(([x, y]) => (
        <path key={`${x}-${y}`} d={`M${x} ${y}l28 50h-56z`} fill="#38a800" />
      ))}
      <text x="442" y="153" className="fill-black text-[60px] [font-family:'Liberation_Sans',sans-serif]">
        N
      </text>
      <path d="M461 175l46 148-46-53-46 53z" fill="#fff" stroke="#111" strokeWidth="4" />
      <path d="M461 175v95l-46 53z" fill="#000" />
    </svg>
  );
}

function Legend() {
  return (
    <div className="absolute top-[563px] left-[390px] h-[100px] w-[247px] text-[16px] leading-5 text-[#111] [font-family:'Liberation_Mono','Noto_Sans_CJK_SC',monospace]">
      <h3 className="h-[30px] pt-1 text-[24px] leading-6 font-bold text-black">图例</h3>
      <div className="flex h-[46px] items-center">
        <svg viewBox="0 0 19 17" className="mx-[13px] h-[17px] w-[19px]">
          <path d="M9.500 0L19 17H0z" fill="#38a800" />
        </svg>
        <span className="ml-3.5 whitespace-nowrap">假设采样点.csv 个事件</span>
      </div>
      <div className="-mt-[3px] flex items-center gap-2">
        <span className="h-[27px] w-[50px] border-2 border-[#111]" />
        省界_region
      </div>
      <svg viewBox="0 0 257 110" className="absolute -top-[5px] -left-[5px] h-[110px] w-[257px]" fill="none">
        <path d="M5 5h247v100H5z" stroke="#2bd0d3" strokeWidth="2" strokeDasharray="6 4" />
        <path
          d="M1 1h9v9H1zM247 1h9v9h-9zM1 100h9v9H1zM247 100h9v9h-9z"
          fill="#18ced2"
          stroke="#111"
          strokeWidth="2"
        />
      </svg>
    </div>
  );
}

/* ---------- context menu ---------- */

type Item = { text: string; icon?: string; keys?: string; sub?: boolean; off?: boolean; hot?: boolean };

const groups: Item[][] = [
  [
    { text: "缩放整个页面(W)", icon: "wholePage" },
    { text: "缩放至所选元素(Z)", icon: "zoomSelected" },
  ],
  [
    { text: "剪切(T)", icon: "cut", keys: "Ctrl+X" },
    { text: "复制(C)", icon: "copy", keys: "Ctrl+C" },
    { text: "删除(D)", icon: "delete", keys: "Delete" },
  ],
  [{ text: "转换为图形(V)", icon: "convert", hot: true }],
  [
    { text: "组(G)", icon: "group", off: true },
    { text: "取消分组(U)", icon: "ungroup", off: true },
  ],
  [{ text: "图形操作(P)", sub: true }],
  [{ text: "顺序(O)", sub: true }],
  [
    { text: "微移(N)", sub: true },
    { text: "对齐(L)", sub: true },
    { text: "分布(B)", sub: true },
    { text: "旋转或翻转(R)", sub: true },
  ],
  [{ text: "属性(I)...", icon: "properties" }],
];

function ContextMenu() {
  return (
    <div
      role="menu"
      className="absolute top-[62px] left-[487px] w-[255px] border-2 border-[#8a8a8a] bg-[#fdfdfd] shadow-[5px_5px_5px_rgba(0,0,0,0.35)]"
    >
      <div className="absolute inset-y-0 left-0 w-[42px] bg-linear-to-r from-[#fcfcfc] to-[#f0f0f0]" />
      {groups.map((items, g) => (
        <div key={g} className="relative">
          {g > 0 && (
            <div className="flex h-1 items-center pl-[53px]">
              <div className="h-px w-full bg-[#bdbdbd]" />
            </div>
          )}
          {items.map((item) => (
            <button
              key={item.text}
              role="menuitem"
              disabled={item.off}
              className={`flex h-[35px] w-full items-center border-2 pl-[7px] text-left text-[18px] leading-6 whitespace-nowrap ${
                item.hot ? "border-[#2a8ad8] bg-[#b3d6f2]" : "border-transparent"
              } ${item.off ? "text-[#a8a8a8]" : "text-[#151515]"}`}
            >
              <span className="mr-5 size-6">{item.icon && <Svg>{icons[item.icon]}</Svg>}</span>
              <span className="w-[113px]">{item.text}</span>
              {item.keys}
              {item.sub && (
                <svg viewBox="0 0 6 12" className="mr-[9px] ml-auto h-3 w-1.5">
                  <path d="M0 0l6 6-6 6z" />
                </svg>
              )}
            </button>
          ))}
        </div>
      ))}
    </div>
  );
}

function Tooltip() {
  return (
    <div
      role="tooltip"
      className="absolute top-[288px] left-[630px] flex h-[92px] w-[254px] flex-col gap-4 rounded-sm border border-[#767676] bg-linear-to-b from-white to-[#c9d9ee] pt-[10px] pl-[5px] text-[18px] leading-6 whitespace-nowrap text-[#555] shadow-[4px_4px_4px_rgba(0,0,0,0.45)]"
    >
      <strong>转换为图形(V)</strong>
      <p className="pl-3">将所选元素转换为简单图形</p>
    </div>
  );
}

function Canvas() {
  return (
    <div className="relative min-w-0 flex-1 overflow-hidden border-t-[3px] border-l-[3px] border-[#8c8c8c] bg-white">
      <div className="absolute inset-y-0 left-[284px] w-[1070px] border-r-3 border-l-2 border-[#222] shadow-[5px_0_0_#7f7f7f]">
        <div className="absolute inset-y-0 left-[21px] border-l border-dashed border-[#b0b0b0]" />
        <div className="absolute inset-y-0 left-[58px] w-[950px] border-x-2 border-[#222]" />
        <div className="absolute inset-y-0 left-[1044px] border-l border-dashed border-[#b0b0b0]" />
      </div>
      <ChinaMap />
      <Legend />
      <ContextMenu />
      <Tooltip />
    </div>
  );
}

function Workspace() {
  return (
    <main className="ml-1.5 flex min-w-0 flex-1 flex-col border-t-[3px] border-l-[3px] border-[#868686] bg-[#f0f0f0]">
      <div className="flex min-h-0 flex-1">
        <div className="flex min-w-0 flex-1 flex-col">
          <div className="flex h-7 shrink-0 overflow-hidden pt-[3px] pl-[318px]">
            <TopRuler />
          </div>
          <div className="flex min-h-0 flex-1">
            <SideRuler />
            <Canvas />
          </div>
        </div>
        <div className="flex w-[26px] shrink-0 flex-col items-center justify-between border-r-2 border-[#e2e2e2] py-1.5">
          <Chevron dir="up" />
          <div className="-mt-14 h-[187px] w-[21px] bg-[#cdcdcd]" />
          <Chevron dir="down" />
        </div>
      </div>
      <div className="flex h-7 shrink-0 border-b border-[#fff]">
        <button aria-label="数据视图" className="mt-1 ml-[3px] flex size-4 shrink-0">
          <Svg size="size-4">
            <path d="M3 3h18v18H3z" fill="#b9d98c" stroke="#444" strokeWidth="2.500" />
            <path d="M6 18l8-9 4 2" stroke="#7fae5c" strokeWidth="3" />
          </Svg>
        </button>
        <button
          aria-label="布局视图"
          className="ml-1 flex h-5 w-[22px] shrink-0 items-center justify-center border border-[#90c4ee] bg-[#cce4f7]"
        >
          <Svg size="size-4">
            <path d="M3 2h13l5 5v15H3z" fill="#fff" stroke="#333" strokeWidth="3" />
            <path d="M8 10h8M8 15h8" stroke="#333" strokeWidth="2.500" />
          </Svg>
        </button>
        <div className="mt-1 ml-[3px] h-[14px] w-px bg-[#777]" />
        <button aria-label="刷新" className="mt-1 ml-3 flex size-3.5 shrink-0">
          <Svg size="size-3.5">
            <path d="M3 10c2-8 14-9 18-2M21 14c-2 8-14 9-18 2" stroke="#1d5a9e" strokeWidth="3" />
            <path d="M23 2v9h-9zM1 22v-9h9z" fill="#1d5a9e" />
          </Svg>
        </button>
        <button aria-label="暂停" className="mt-[5px] ml-[10px] flex h-2.5 w-2.5 shrink-0 justify-between">
          <span className="h-2.5 w-[3px] bg-[#2c5fae]" />
          <span className="h-2.5 w-[3px] bg-[#2c5fae]" />
        </button>
        <div className="mt-[7px] ml-[26px]">
          <Chevron dir="left" />
        </div>
        <div className="ml-1.5 flex flex-1 border-l border-[#c8c8c8] pt-[3px] pl-[124px]">
          <div className="h-[21px] w-[82%] bg-[#cdcdcd]" />
        </div>
      </div>
    </main>
  );
}

/* ---------- floating meter ---------- */

function SpeedMeter() {
  return (
    <div className="absolute right-0 bottom-0 flex h-[74px] items-center text-[15px] leading-[22px] text-[#222]">
      <div className="z-10 flex size-[73px] items-center justify-center rounded-full border border-[#888] bg-[#f3f3f3] shadow-[0_2px_8px_rgba(0,0,0,0.5)]">
        <div className="flex size-[66px] items-center justify-center rounded-full border-2 border-[#167a4b] bg-[radial-gradient(ellipse_12px_5px_at_50%_12%,#d5e6df_0,#1b7a57_100%,transparent_100%),linear-gradient(#12734f_0,#2f8a68_32%,#58d56b_33%,#45c95c_100%)] text-[20px] text-white [font-family:'Liberation_Sans',sans-serif]">
          66%
        </div>
      </div>
      <div className="-ml-9 flex h-[59px] w-[154px] items-center rounded-r-full border border-[#9a9a9a] bg-linear-to-b from-[#fafafa] to-[#d2d2d2] pr-2.5 pl-[41px] shadow-[0_1px_4px_rgba(0,0,0,0.4)]">
        <div className="flex flex-col gap-2.5">
          <svg viewBox="0 0 10 12" className="h-3 w-2.5">
            <path d="M5 0l5 5H7v7H3V5H0z" fill="#e4573d" />
          </svg>
          <svg viewBox="0 0 10 12" className="h-3 w-2.5">
            <path d="M5 12l5-5H7V0H3v7H0z" fill="#23994e" />
          </svg>
        </div>
        <div className="flex-1 pr-2 text-right">
          <div>0K/s</div>
          <div>0.2K/s</div>
        </div>
        <button
          aria-label="加速"
          className="relative flex size-6 items-center justify-center rounded-full bg-[#3a82dd]"
        >
          <svg viewBox="0 0 12 12" className="size-3">
            <path d="M6 0v12M0 6h12" stroke="#fff" strokeWidth="2" />
          </svg>
          <span className="absolute -top-0.5 -right-1 size-3 rounded-full bg-[#dd3a35]" />
        </button>
      </div>
    </div>
  );
}

/* ---------- taskbar ---------- */

function TaskApp({
  label,
  children,
  active,
  stacked,
}: {
  label: string;
  children: ReactNode;
  active?: boolean;
  stacked?: boolean;
}) {
  return (
    <button
      aria-label={label}
      className={`relative mr-0.5 flex h-full w-[73px] items-center justify-center ${active ? "bg-[#55616a]" : ""}`}
    >
      {children}
      <span
        className={`absolute bottom-0 h-[3px] bg-[#76b9ed] ${
          active ? "inset-x-0" : stacked ? "right-5 left-1.5" : "inset-x-1.5"
        }`}
      />
      {stacked && <span className="absolute right-1.5 bottom-0 h-[3px] w-3.5 bg-[#5a8fb8]" />}
    </button>
  );
}

function Taskbar() {
  return (
    <footer className="relative flex h-[60px] shrink-0 bg-[linear-gradient(90deg,#25353f_0%,#26363f_14%,#41413f_21%,#404040_28%,#263547_34%,#26343c_46%,#27363a_62%,#2c2b28_74%,#1e2b33_79%,#1d2d34_100%)] text-white">
      <nav className="flex">
        <button aria-label="开始" className="flex w-[72px] items-center justify-center">
          <Svg>
            <path
              d="M0 3.500L10 2v9.500H0zM11 2l13-2v11.500H11zM0 12.500h10V22L0 20.500zM11 12.500h13V24l-13-2z"
              fill="#fff"
            />
          </Svg>
        </button>
        <button aria-label="搜索" className="flex w-[72px] items-center justify-center">
          <Svg>
            <circle cx="15.500" cy="8.500" r="8" stroke="#fff" strokeWidth="1.300" />
            <path d="M10 14.500L.5 24" stroke="#fff" strokeWidth="1.400" />
          </Svg>
        </button>
        <button aria-label="Cortana" className="flex w-[72px] items-center justify-center">
          <Svg>
            <circle cx="12" cy="12" r="10" stroke="#fff" strokeWidth="3" />
          </Svg>
        </button>
        <button aria-label="任务视图" className="flex w-[72px] items-center justify-center">
          <Svg>
            <path
              d="M.5 0v3.500h15V0M.5 6.500h15v10H.5zM.5 23v-3.500h15V23M22.500 0v7M22.500 11v12"
              stroke="#fff"
              strokeWidth="1.200"
            />
            <path d="M21 7.500h3v3h-3z" fill="#fff" />
          </Svg>
        </button>
      </nav>
      <nav className="ml-40 flex">
        <TaskApp label="Microsoft Edge">
          <FaEdgeLegacy className="size-8 text-[#0b7bd8]" />
        </TaskApp>
        <TaskApp label="文件资源管理器" stacked>
          <Svg size="size-8">
            <path d="M0 3h9l2 2h13v17H0z" fill="#e0a30c" />
            <path d="M0 6h10l2-1h12v16.500H0z" fill="#fcd465" />
            <path d="M4 22v-9h16v9h-4v-5H8v5z" fill="#3c97dd" />
          </Svg>
        </TaskApp>
        <TaskApp label="Chrome">
          <Svg size="size-[34px]">
            <circle cx="12" cy="12" r="12" fill="#fcd04b" />
            <path d="M12 12L1.600 6A12 12 0 0 0 12 24l5-9z" fill="#2aa45c" />
            <path d="M12 7h10.900A12 12 0 0 0 1.600 6l6 9z" fill="#dd4b3e" />
            <circle cx="12" cy="12" r="5.600" fill="#fff" />
            <circle cx="12" cy="12" r="4.400" fill="#4a86f0" />
          </Svg>
        </TaskApp>
        <TaskApp label="ArcMap" active>
          <ArcGlobe size="size-9" />
        </TaskApp>
        <TaskApp label="微信">
          <span className="flex size-9 items-center justify-center bg-[#06b317]">
            <FaWeixin className="size-7" />
          </span>
        </TaskApp>
        <TaskApp label="Word">
          <span className="relative flex h-8 w-[35px]">
            <svg viewBox="0 0 27 32" className="ml-2 h-8 w-[27px]">
              <path d="M0 0h27v8H0z" fill="#41a5ee" />
              <path d="M0 8h27v8H0z" fill="#2b7cd3" />
              <path d="M0 16h27v8H0z" fill="#185abd" />
              <path d="M0 24h27v8H0z" fill="#103f91" />
            </svg>
            <span className="absolute top-[7px] left-0 flex size-[18px] items-center justify-center rounded-xs bg-[#185abd] text-[13px] font-bold">
              W
            </span>
          </span>
        </TaskApp>
      </nav>
      <div className="ml-auto flex items-center">
        <button aria-label="显示隐藏的图标" className="flex w-[35px] justify-center">
          <svg viewBox="0 0 18 10" className="h-2.5 w-[18px]">
            <path d="M0 9.500L9 1l9 8.500" fill="none" stroke="#fff" strokeWidth="1.400" />
          </svg>
        </button>
        <button aria-label="电池" className="flex w-[35px] justify-center">
          <svg viewBox="0 0 24 18" className="h-[18px] w-6" fill="none">
            <path d="M6 6h16v10H6z" stroke="#fff" />
            <path d="M8 8h12v6H8zM22 9h2v4h-2zM1 4h7v4L6 10H3L1 8z" fill="#fff" />
            <path d="M2.500 0v4M6.500 0v4M4.500 9v6" stroke="#fff" />
          </svg>
        </button>
        <button aria-label="安全" className="flex w-[38px] justify-center">
          <Svg>
            <circle cx="10" cy="12" r="8" stroke="#f5b21c" strokeWidth="3" />
            <path d="M6 10l4 5L20 0" stroke="#ddd" strokeWidth="1.800" />
            <circle cx="17" cy="17" r="6.500" fill="#d7221c" />
            <path d="M14 16.500h6V21h-6z" fill="#fff" />
            <path d="M15 16.500c0-4 4-4 4 0" stroke="#fff" strokeWidth="1.200" />
          </Svg>
        </button>
        <button aria-label="输入法语言" className="w-8 text-center text-[23px] leading-7">
          中
        </button>
        <button
          aria-label="输入法模式"
          className="ml-4 flex size-[22px] items-center justify-center bg-white text-[20px] leading-none text-black"
        >
          拼
        </button>
        <div className="ml-[19px] w-[110px] text-center text-[19px] leading-[28px]">
          <div>16:54</div>
          <div>2020/6/13</div>
        </div>
        <button aria-label="新闻" className="relative ml-5 flex h-8 w-[34px]">
          <svg viewBox="0 0 34 32" className="h-8 w-[34px]" fill="none">
            <path d="M1 3v20h3" stroke="#fff" strokeWidth="1.500" />
            <path d="M4 0h20v22H4z" fill="#fff" />
            <path d="M8 7h12M8 12h12M8 17h8" stroke="#25353f" strokeWidth="1.600" />
            <rect x="17" y="13" width="17" height="18" rx="2" fill="#232c40" stroke="#9aa2ad" />
          </svg>
          <span className="absolute right-1 bottom-0.5 text-[15px] leading-4">3</span>
        </button>
        <button aria-label="操作中心" className="ml-[26px] flex w-6">
          <svg viewBox="0 0 24 26" className="h-[26px] w-6" fill="none">
            <path d="M.7 1h22.600v19H16l-4 4v-4H.7z" stroke="#fff" strokeWidth="1.400" />
          </svg>
        </button>
        <div className="mr-1.5 ml-[30px] h-[60px] w-px bg-[#8b959a]" />
      </div>
      <div className="absolute right-2.5 bottom-[7px] text-[16px] leading-6 text-white/65 [font-family:'Liberation_Sans',sans-serif]">
        https://blog.csdn.net/weixin_45126863
      </div>
    </footer>
  );
}

export default function App() {
  return (
    <div className="flex h-screen flex-col overflow-hidden bg-linear-to-r from-[#f0f0f0] to-[#fcfcfc] text-[#111] [font-family:'Open_Sans','Noto_Sans_CJK_SC',sans-serif]">
      <header className="flex h-[35px] shrink-0 items-center bg-white pb-0.5 pl-0.5 text-[18px] leading-6">
        <ArcGlobe size="size-6" />
        <h1 className="ml-[5px] flex-1 text-black">无标题 - ArcMap</h1>
        <button aria-label="最小化" className="flex w-[70px] justify-center">
          <svg viewBox="0 0 16 16" className="size-4">
            <path d="M0 8.500h16" stroke="#000" />
          </svg>
        </button>
        <button aria-label="还原" className="flex w-[70px] justify-center">
          <svg viewBox="0 0 16 16" className="size-4" fill="none" stroke="#000">
            <path d="M.5 3.500h12v12H.5zM3.500 3.500v-3h12v12h-3" />
          </svg>
        </button>
        <button aria-label="关闭" className="flex w-[72px] justify-center">
          <svg viewBox="0 0 16 16" className="size-4">
            <path d="M0 0l16 16M16 0L0 16" stroke="#000" strokeWidth="1.200" />
          </svg>
        </button>
      </header>

      <nav className="flex h-[42px] shrink-0 items-center gap-[26px] pb-0.5 pl-[17px] text-[18px] leading-6">
        {menus.map((m) => (
          <button key={m}>{m}</button>
        ))}
      </nav>

      <div className="mb-0.5 flex shrink-0 flex-col gap-[3px]">
        <Toolbar>
          <ToolButton id="new" label="新建" />
          <ToolButton id="open" label="打开" />
          <ToolButton id="save" label="保存" />
          <ToolButton id="print" label="打印" />
          <Sep />
          <ToolButton id="cut" label="剪切" />
          <ToolButton id="copy" label="复制" />
          <ToolButton id="paste" label="粘贴" />
          <ToolButton id="delete" label="删除" />
          <Sep />
          <ToolButton id="undo" label="撤消" />
          <ToolButton id="redo" label="恢复" off />
          <Sep />
          <ToolButton id="add" label="添加数据" />
          <Caret />
          <Sep />
          <Combo label="地图比例" value="1:58,617,667" width="w-[222px]" />
          <Sep />
          <ToolButton id="edit" label="编辑器工具条" />
          <Sep />
          <ToolButton id="toc" label="内容列表窗口" />
          <ToolButton id="catalog" label="目录窗口" />
          <ToolButton id="search" label="搜索窗口" />
          <ToolButton id="toolbox" label="ArcToolbox" />
          <ToolButton id="python" label="Python 窗口" />
          <Sep />
          <ToolButton id="model" label="模型构建器" />
        </Toolbar>
        <Toolbar>
          <ToolButton id="zoomIn" label="放大" />
          <ToolButton id="zoomOut" label="缩小" />
          <ToolButton id="pan" label="平移" />
          <ToolButton id="globe" label="全图" />
          <Sep />
          <ToolButton id="fixedIn" label="固定比例放大" />
          <ToolButton id="fixedOut" label="固定比例缩小" />
          <Sep />
          <ToolButton id="back" label="返回上一视图" />
          <ToolButton id="forward" label="转至下一视图" off />
          <Sep />
          <ToolButton id="selectFeatures" label="选择要素" />
          <Caret />
          <ToolButton id="clear" label="清除所选要素" off />
          <Sep />
          <ToolButton id="pointer" label="选择元素" active />
          <Sep />
          <ToolButton id="identify" label="识别" />
          <ToolButton id="lightning" label="超链接" off />
          <ToolButton id="popup" label="HTML 弹出窗口" off />
          <Sep />
          <ToolButton id="measure" label="测量" />
          <Sep />
          <ToolButton id="find" label="查找" />
          <ToolButton id="route" label="查找路径" />
          <ToolButton id="xy" label="转到 XY" />
          <Sep />
          <ToolButton id="time" label="时间滑块" off />
          <Sep />
          <ToolButton id="viewer" label="创建查看器窗口" off />
        </Toolbar>
        <Toolbar indent>
          <ToolButton id="pageZoomIn" label="页面放大" />
          <ToolButton id="pageZoomOut" label="页面缩小" />
          <ToolButton id="pagePan" label="页面平移" />
          <ToolButton id="wholePage" label="缩放整个页面" />
          <ToolButton id="oneToOne" label="缩放至 100%" />
          <Sep />
          <ToolButton id="pageFixedIn" label="页面固定放大" />
          <ToolButton id="pageFixedOut" label="页面固定缩小" />
          <Sep />
          <ToolButton id="pageBack" label="返回上一范围" />
          <ToolButton id="pageForward" label="前进至下一范围" off />
          <Combo label="页面缩放" value="90%" width="w-[91px]" />
          <Sep />
          <ToolButton id="draft" label="切换描绘模式" />
          <ToolButton id="focus" label="焦点数据框" />
          <ToolButton id="layout" label="更改布局" />
          <ToolButton id="pages" label="数据驱动页面" />
        </Toolbar>
      </div>

      <div className="relative flex min-h-0 flex-1 flex-col">
        <div className="flex min-h-0 flex-1">
          <ContentsPanel />
          <Workspace />
          <aside className="w-[35px] shrink-0 bg-[#fbfbfb] pt-[3px] pl-[5px]">
            <button className="flex h-[79px] w-[30px] flex-col items-center gap-1 rounded-l-md border-2 border-r-0 border-[#a9a9a9] bg-[#f7f7f7] pt-1.5 text-[17px] leading-5 text-[#555]">
              <Svg>{icons.catalog}</Svg>
              <span className="[text-orientation:sideways] [writing-mode:vertical-rl]">目录</span>
            </button>
          </aside>
        </div>
        <div className="flex h-[31px] shrink-0 bg-[#f0f0f0]">
          <div className="w-[44%] border-r-2 border-[#f9f9f9]" />
          <div className="w-[34%] border-r-2 border-[#f9f9f9]" />
        </div>
        <SpeedMeter />
      </div>

      <Taskbar />
    </div>
  );
}
